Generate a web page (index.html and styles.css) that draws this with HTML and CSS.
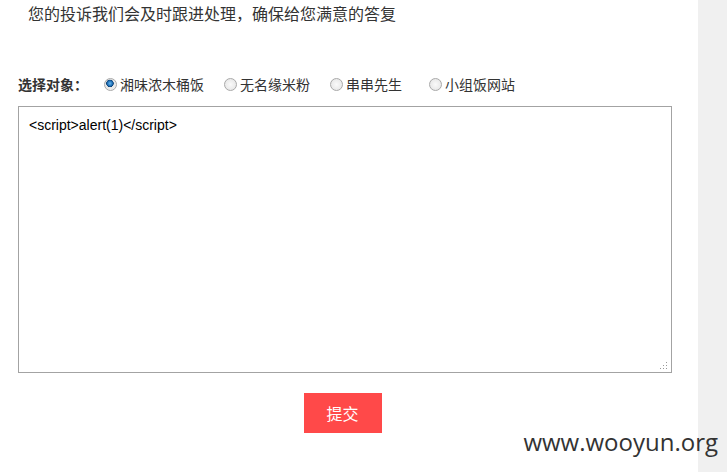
FILE: index.html
```html
<!DOCTYPE html>
<html lang="zh-CN">
<head>
    <meta charset="UTF-8">
    <meta name="viewport" content="width=device-width, initial-scale=1.0">
    <title>投诉</title>
    <link rel="stylesheet" href="styles.css">
</head>
<body>
    <div class="page">
        <div class="main">
            <p class="notice">您的投诉我们会及时跟进处理，确保给您满意的答复</p>

            <form class="complain">
                <div class="targets">
                    <span class="targets-label">选择对象：</span>
                    <label class="opt"><input type="radio" name="target" checked>湘味浓木桶饭</label>
                    <label class="opt"><input type="radio" name="target">无名缘米粉</label>
                    <label class="opt opt-wide"><input type="radio" name="target">串串先生</label>
                    <label class="opt"><input type="radio" name="target">小组饭网站</label>
                </div>

                <div class="box">
                    <textarea class="content">&lt;script&gt;alert(1)&lt;/script&gt;</textarea>
                    <svg class="grip" width="9" height="9" viewBox="0 0 9 9">
                        <rect x="7" y="1" width="1" height="1" fill="#999"/>
                        <rect x="4" y="4" width="1" height="1" fill="#999"/>
                        <rect x="7" y="4" width="1" height="1" fill="#999"/>
                        <rect x="1" y="7" width="1" height="1" fill="#999"/>
                        <rect x="4" y="7" width="1" height="1" fill="#999"/>
                        <rect x="7" y="7" width="1" height="1" fill="#999"/>
                    </svg>
                </div>

                <div class="actions">
                    <button type="button" class="submit">提交</button>
                </div>
            </form>
        </div>
        <div class="rail"></div>
    </div>
    <div class="watermark">www.wooyun.org</div>
</body>
</html>
```

FILE: styles.css
```css
body {
    margin: 0;
    padding: 0;
    font-family: "Liberation Sans", "Noto Sans CJK SC", sans-serif;
    color: #333;
    background: #fff;
}
.page {
    display: flex;
    height: 472px;
    overflow: hidden;
}
.main {
    width: 698px;
    background: #fff;
}
.rail {
    flex: 1;
    background: #f0f0f0;
}
.notice {
    margin: 4px 0 0 28px;
    font-size: 16px;
    line-height: 22px;
}
.complain {
    padding: 0 27px 0 18px;
}
.targets {
    display: flex;
    align-items: center;
    margin-top: 47px;
    height: 22px;
    font-size: 14px;
}
.targets-label {
    font-weight: bold;
    margin-right: 15px;
}
.opt {
    display: flex;
    align-items: center;
    margin-right: 19px;
}
.opt-wide {
    margin-right: 26px;
}
.opt input {
    appearance: none;
    -webkit-appearance: none;
    width: 13px;
    height: 13px;
    margin: 0 3px 0 1px;
    border: 1px solid #a9a9a9;
    border-radius: 50%;
    background: radial-gradient(circle, #fafafa 0, #e2e2e2 100%);
    box-sizing: border-box;
}
.opt input:checked {
    background: radial-gradient(circle at 45% 40%, #6ab8f0 0, #1f6fb5 2.5px, #0b3f73 3.5px, #e6e6e6 4px, #f4f4f4 100%);
}
.box {
    position: relative;
    margin-top: 11px;
}
.content {
    display: block;
    width: 654px;
    height: 267px;
    box-sizing: border-box;
    border: 1px solid #a3a3a3;
    padding: 10px 10px;
    font-family: "Liberation Sans", Arial, sans-serif;
    font-size: 14px;
    line-height: 17px;
    color: #000;
    resize: none;
    outline: none;
}
.grip {
    position: absolute;
    right: 3px;
    bottom: 3px;
}
.actions {
    display: flex;
    justify-content: center;
    margin-top: 20px;
    padding-right: 4px;
}
.submit {
    width: 78px;
    height: 40px;
    border: none;
    background: #ff4949;
    color: #fff;
    font-family: "Noto Sans CJK SC", sans-serif;
    font-size: 16px;
    cursor: pointer;
}
.watermark {
    position: absolute;
    right: 9px;
    top: 425px;
    font-family: "Open Sans", sans-serif;
    font-size: 24px;
    color: #333;
}
```
